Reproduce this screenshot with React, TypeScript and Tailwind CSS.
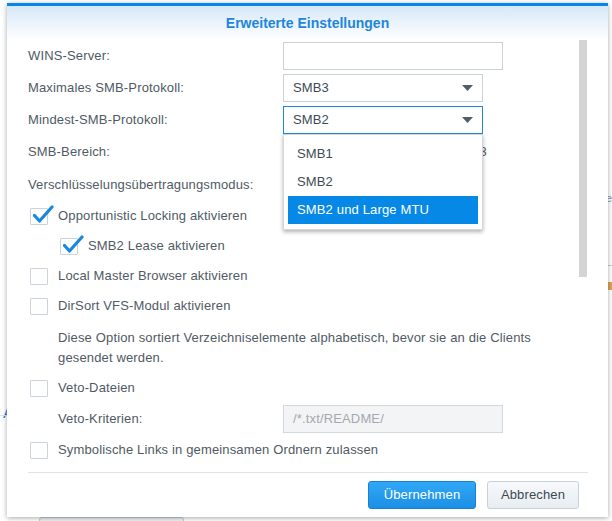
const font = { fontFamily: '"Liberation Sans", Arial, sans-serif' };

const Check = () => (
  <svg className="absolute left-[1px] top-[-5px]" width="22" height="22" viewBox="0 0 22 22">
    <path d="M2.5 11.5 L7.5 17 L20 3" fill="none" stroke="#1787e0" strokeWidth="3.2" strokeLinecap="round" strokeLinejoin="round" />
  </svg>
);

const Box = ({ checked }: { checked?: boolean }) => (
  <div className="relative w-[18px] h-[17px] shrink-0 border border-[#cbd3da] bg-white rounded-[1px]">
    {checked && <Check />}
  </div>
);

const Caret = () => (
  <svg width="11" height="6" viewBox="0 0 11 6" className="shrink-0">
    <path d="M0 0 H11 L5.5 6 Z" fill="#555d66" />
  </svg>
);

const Row = ({ label, children, h = "h-[32px]" }: { label: string; children?: React.ReactNode; h?: string }) => (
  <div className={`flex items-center ${h}`}>
    <div className="w-[255px] shrink-0">{label}</div>
    {children}
  </div>
);

const CheckRow = ({ label, checked, indent }: { label: string; checked?: boolean; indent?: boolean }) => (
  <div className={`flex items-center h-[30px] gap-[10px] ${indent ? "pl-[32px]" : "pl-[2px]"}`}>
    <Box checked={checked} />
    <span>{label}</span>
  </div>
);

export default function App() {
  return (
    <div className="relative w-[612px] h-[521px] bg-white overflow-hidden text-[13px] tracking-[0.15px] text-[#4f5a65]" style={font}>
      {/* page behind the dialog */}
      <div className="absolute left-[3px] top-[402px] text-[15px] text-[#1a7fd4]">A</div>
      <div className="absolute left-0 top-[415px] w-[8px] h-px bg-[#dde3e8]" />
      <div className="absolute left-[606px] top-[190px] text-[11px] text-[#8a939c]">e</div>
      <div className="absolute left-[606px] top-[265px] w-[8px] h-px bg-[#b9d3ea]" />
      <div className="absolute left-[606px] top-[282px] w-[6px] h-[8px] bg-[#d9a45a]" />
      <div className="absolute left-[39px] top-[517px] w-[145px] h-[10px] rounded-[3px] bg-[#eef1f4] border border-[#c6ccd2]" />

      {/* dialog */}
      <div className="relative ml-[7px] mt-[3px] w-[601px] h-[514px] bg-white border-t-[3px] border-[#0a86e8] shadow-[0_1px_5px_rgba(0,0,0,0.35)] flex flex-col">
        <div className="h-[34px] shrink-0 flex items-center justify-center bg-gradient-to-b from-[#d6e8f8] to-white">
          <span className="text-[14px] font-bold text-[#1f86dc] tracking-normal">Erweiterte Einstellungen</span>
        </div>

        <div className="flex flex-1 min-h-0">
          <div className="flex-1 pl-[21px]">
            <Row label="WINS-Server:">
              <div className="w-[220px] h-[28px] border border-[#c9d1d9] bg-white" />
            </Row>
            <Row label="Maximales SMB-Protokoll:">
              <div className="w-[200px] h-[28px] border border-[#c9d1d9] bg-white flex items-center justify-between pl-[9px] pr-[9px]">
                <span className="text-[#414b55]">SMB3</span>
                <Caret />
              </div>
            </Row>
            <Row label="Mindest-SMB-Protokoll:">
              <div className="relative w-[200px] h-[28px]">
                <div className="h-full border border-[#1b88e0] bg-white flex items-center justify-between pl-[9px] pr-[9px]">
                  <span className="text-[#414b55]">SMB2</span>
                  <Caret />
                </div>
                <div className="absolute z-10 left-0 top-[28px] w-[200px] bg-white border border-[#d3d8dd] shadow-[0_2px_4px_rgba(0,0,0,0.3)] py-[5px] pl-[4px] pr-[4px] text-[#414b55]">
                  <div className="h-[28px] flex items-center pl-[9px]">SMB1</div>
                  <div className="h-[28px] flex items-center pl-[9px]">SMB2</div>
                  <div className="h-[28px] flex items-center pl-[9px] bg-[#0588e6] text-white">SMB2 und Large MTU</div>
                </div>
              </div>
            </Row>
            <Row label="SMB-Bereich:">
              <div className="w-[204px] text-right">SMB3</div>
            </Row>
            <Row label="Verschlüsselungsübertragungsmodus:" h="h-[33px]" />

            <CheckRow label="Opportunistic Locking aktivieren" checked />
            <CheckRow label="SMB2 Lease aktivieren" checked indent />
            <CheckRow label="Local Master Browser aktivieren" />
            <CheckRow label="DirSort VFS-Modul aktivieren" />

            <p className="pl-[30px] pt-[7px] pb-[5px] leading-[20px] w-[540px]">
              Diese Option sortiert Verzeichniselemente alphabetisch, bevor sie an die Clients gesendet werden.
            </p>

            <CheckRow label="Veto-Dateien" />
            <div className="flex items-center h-[32px]">
              <div className="w-[255px] shrink-0 pl-[30px]">Veto-Kriterien:</div>
              <div className="w-[220px] h-[28px] border border-[#d3d8dd] bg-[#f3f4f5] flex items-center pl-[9px] text-[#a3a9ae]">
                /*.txt/README/
              </div>
            </div>
            <CheckRow label="Symbolische Links in gemeinsamen Ordnern zulassen" />
          </div>
          <div className="w-[8px] shrink-0 mr-[21px]">
            <div className="h-[237px] bg-[#d4d4d4]" />
          </div>
        </div>

        <div className="ml-[21px] mr-[20px] h-px bg-[#e1e4e7]" />
        <div className="h-[44px] shrink-0 flex items-start justify-end gap-[11px] pt-[8px] pr-[29px]">
          <button className="w-[108px] h-[28px] rounded-[3px] border border-[#1a80d3] bg-gradient-to-b from-[#31a8f6] to-[#1a8fe5] text-white text-[13px]" style={font}>
            Übernehmen
          </button>
          <button className="w-[92px] h-[28px] rounded-[3px] border border-[#c8d1da] bg-gradient-to-b from-[#f7f9fb] to-[#e8edf2] text-[#3d4852] text-[13px]" style={font}>
            Abbrechen
          </button>
        </div>
      </div>
    </div>
  );
}
